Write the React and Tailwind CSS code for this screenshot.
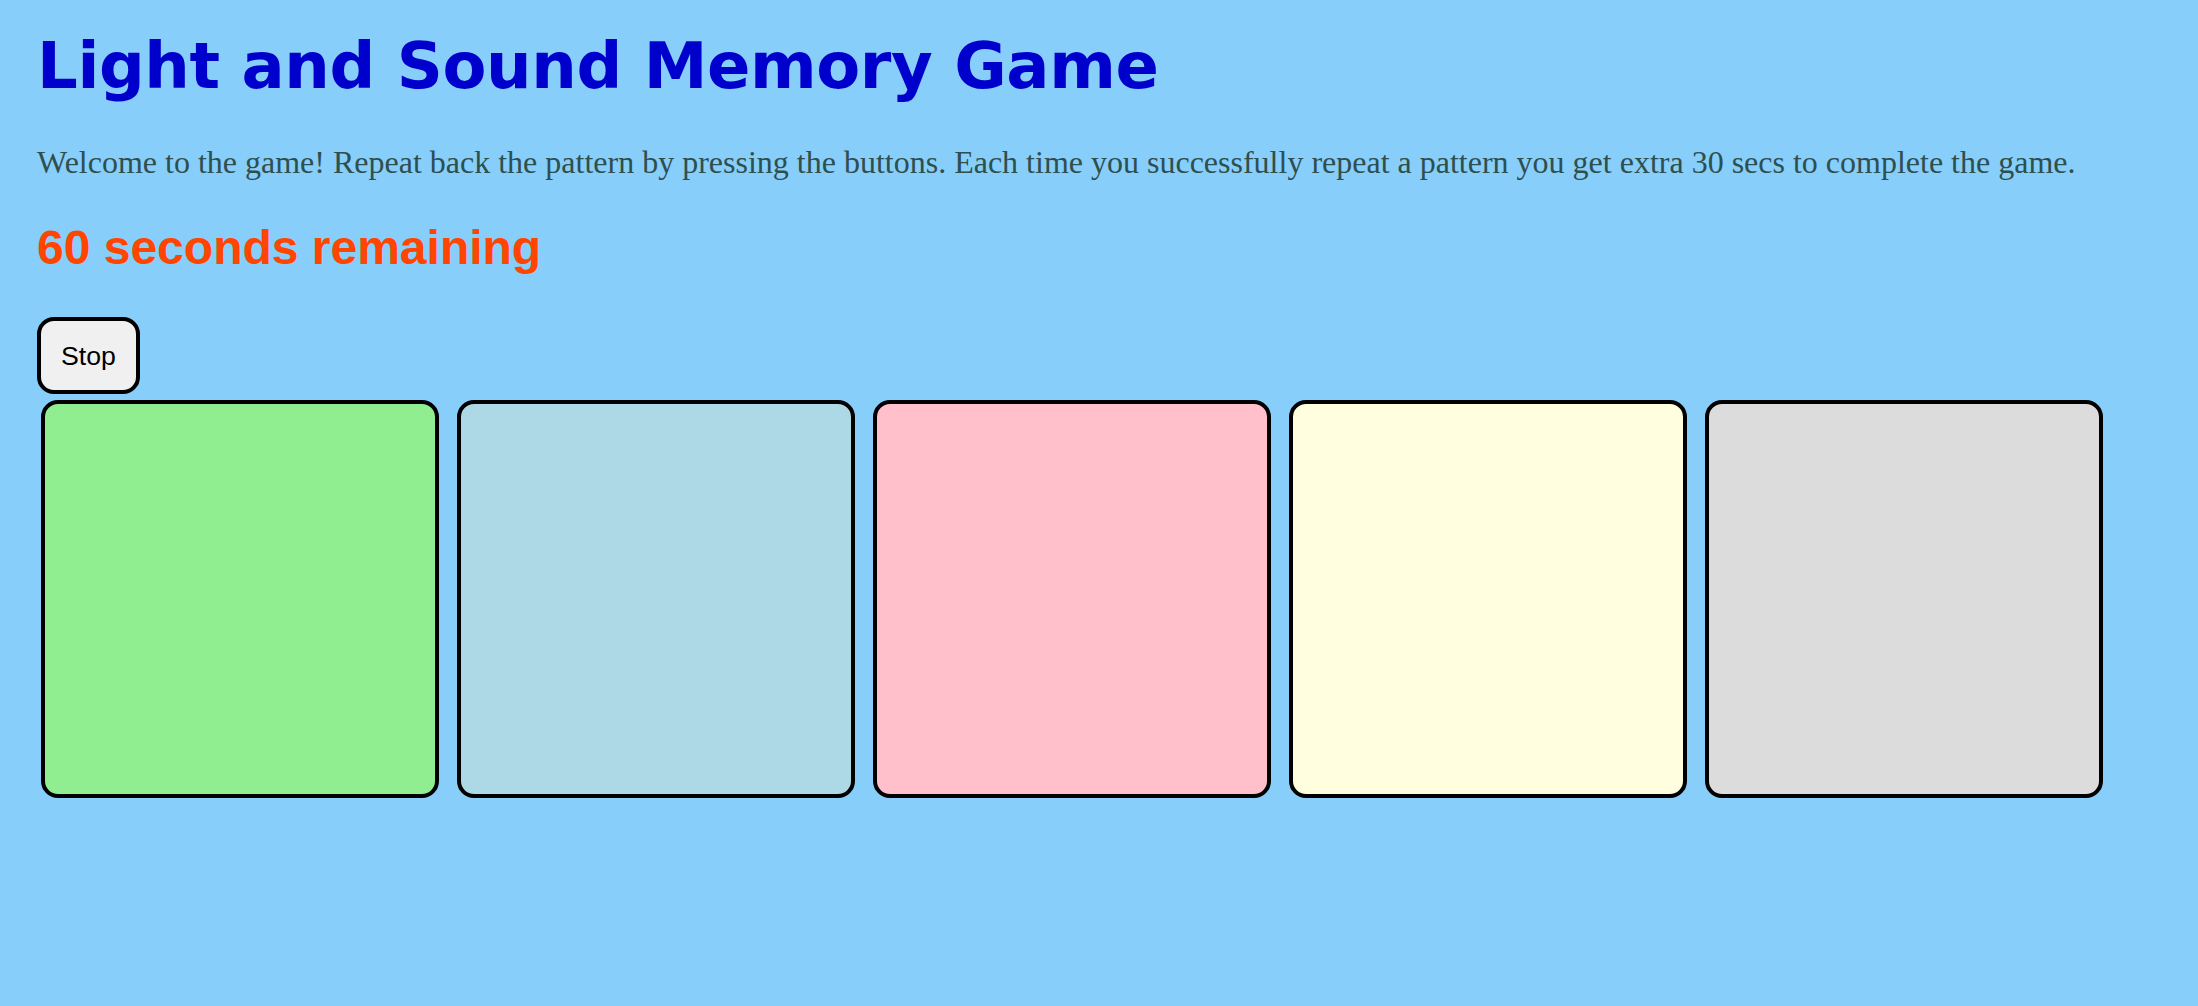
import { useState } from 'react';

const PADS = [
  { id: 1, color: 'bg-[#90ee90]' },
  { id: 2, color: 'bg-[#add8e6]' },
  { id: 3, color: 'bg-[#ffc0cb]' },
  { id: 4, color: 'bg-[#ffffe0]' },
  { id: 5, color: 'bg-[#dcdcdc]' },
];

const App = () => {
  const [playing, setPlaying] = useState(true);

  return (
    <div className="min-h-screen bg-[#87cefa] pl-[37px] pt-[27px] font-['Liberation_Sans',Arial,sans-serif]">
      <h1 className="text-[64px] leading-[78px] font-bold tracking-[-0.4px] text-[#0000cd] font-['DejaVu_Sans',Verdana,sans-serif]">
        Light and Sound Memory Game
      </h1>

      <p className="mt-[39px] text-[32px] leading-[36px] text-[#2f4f4f] font-['Liberation_Serif','Times_New_Roman',serif]">
        Welcome to the game! Repeat back the pattern by pressing the buttons. Each time you successfully repeat a pattern you get extra 30 secs to complete the game.
      </p>

      <h2 className="mt-[41px] text-[48px] leading-[54px] font-bold text-[#ff4500]">
        60 seconds remaining
      </h2>

      <button
        onClick={() => setPlaying(!playing)}
        className="mt-[42px] block h-[77px] w-[103px] border-4 border-black rounded-[17px] bg-[#f0f0f0] text-[26.67px] text-black"
      >
        {playing ? 'Stop' : 'Start'}
      </button>

      <div className="mt-[6px] ml-[4px] flex gap-[18px]">
        {PADS.map(pad => (
          <button
            key={pad.id}
            className={`h-[398px] w-[398px] border-4 border-black rounded-[17px] ${pad.color}`}
          ></button>
        ))}
      </div>
    </div>
  );
};

export default App;
